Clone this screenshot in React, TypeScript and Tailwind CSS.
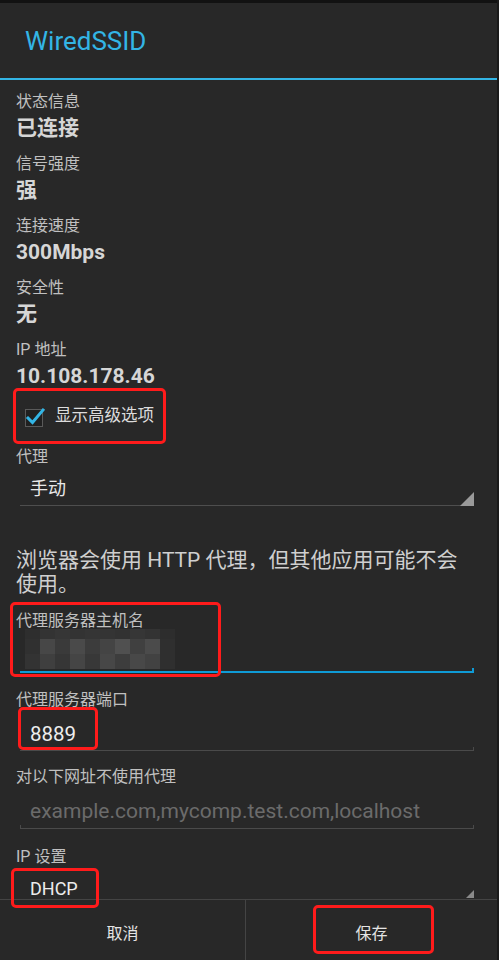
import React from "react";

const FONT = 'Roboto, "Noto Sans CJK SC", sans-serif';

const mosaic: string[][] = [
  ["#2e2e2e", "#333333", "#363636", "#333333", "#353535", "#343434", "#323232", "#363636", "#333333", "#2d2d2d"],
  ["#303030", "#474747", "#3a3a3a", "#4a4a4a", "#3c3c3c", "#444444", "#505050", "#404040", "#4b4b4b", "#2f2f2f"],
  ["#333333", "#3f3f3f", "#363636", "#454545", "#383838", "#474747", "#3d3d3d", "#484848", "#424242", "#2f2f2f"],
];

function Pair({ label, value }: { label: string; value: string }) {
  return (
    <div className="flex flex-col h-[62px]">
      <div className="h-[24px] leading-[24px] text-[16px] text-[#c0c0c0]">{label}</div>
      <div className="h-[28px] leading-[28px] text-[21px] font-bold text-[#d6d6d6]">{value}</div>
    </div>
  );
}

function Label({ children, cls }: { children: React.ReactNode; cls?: string }) {
  return <div className={"h-[24px] leading-[24px] text-[16px] text-[#c0c0c0] " + (cls ?? "")}>{children}</div>;
}

function RedBox({ cls }: { cls: string }) {
  return <div className={"absolute border-[3px] border-[#ff1b1b] rounded-[5px] pointer-events-none " + cls} />;
}

export default function App() {
  return (
    <div className="relative w-[499px] h-[960px] bg-[#1a1a1a] overflow-hidden" style={{ fontFamily: FONT }}>
      <div className="w-[497px] h-[960px] bg-[#282828] border-t-[3px] border-[#121212] flex flex-col">
        {/* Title */}
        <div className="h-[75px] flex items-center pl-[25px]">
          <span className="text-[26px] text-[#33b5e5] leading-none">WiredSSID</span>
        </div>
        <div className="h-[2px] bg-[#33b5e5]" />

        {/* Content */}
        <div className="flex-1 flex flex-col pl-[16px] pt-[10px]">
          <Pair label="状态信息" value="已连接" />
          <Pair label="信号强度" value="强" />
          <Pair label="连接速度" value="300Mbps" />
          <Pair label="安全性" value="无" />
          <Pair label="IP 地址" value="10.108.178.46" />

          {/* checkbox */}
          <div className="h-[48px] -mt-[8px] flex items-center pl-[8px] gap-[9px]">
            <svg width="22" height="22" viewBox="0 0 22 22">
              <rect x="1.5" y="4.5" width="17" height="17" fill="#202020" stroke="#5a5a5a" strokeWidth="1" />
              <path d="M4 13 L8.5 17.5 L19 5" fill="none" stroke="#33b5e5" strokeWidth="3" strokeLinecap="square" />
            </svg>
            <span className="text-[16.5px] text-[#dcdcdc]">显示高级选项</span>
          </div>

          <Label cls="mt-[5px]">代理</Label>
          {/* spinner */}
          <div className="relative h-[38px] mr-[23px] ml-[4px] flex items-center pl-[10px]">
            <span className="text-[18px] text-[#e8e8e8]">手动</span>
            <div className="absolute left-0 right-0 bottom-[1px] h-[1px] bg-[#4e4e4e]" />
            <div className="absolute right-0 bottom-[1px] w-[14px] h-[14px] bg-[#9a9a9a]" style={{ clipPath: "polygon(100% 0, 100% 100%, 0 100%)" }} />
          </div>

          <div className="mt-[41px] w-[470px] text-[21px] leading-[24px] text-[#cfcfcf]">
            浏览器会使用 HTTP 代理，但其他应用可能不会<span className="whitespace-nowrap">使用。</span>
          </div>

          <Label cls="mt-[13px]">代理服务器主机名</Label>
          <div className="relative h-[40px] mr-[23px] ml-[4px]">
            <div className="absolute left-[5px] top-[-4px] flex flex-col">
              {mosaic.map((row, i) => (
                <div key={i} className={"flex " + (i === 0 ? "h-[10px]" : "h-[15px]")}>
                  {row.map((c, j) => (
                    <div key={j} className="w-[15px]" style={{ background: c }} />
                  ))}
                </div>
              ))}
            </div>
            <div className="absolute left-0 right-0 bottom-0 h-[2px] bg-[#0f9bd6]" />
            <div className="absolute right-0 bottom-0 w-[2px] h-[5px] bg-[#0f9bd6]" />
          </div>

          <Label cls="mt-[15px]">代理服务器端口</Label>
          <div className="relative h-[39px] mr-[23px] ml-[4px] flex items-center pl-[10px] pt-[5px]">
            <span className="text-[20.5px] text-[#ededed]">8889</span>
            <div className="absolute left-0 right-0 bottom-0 h-[1px] bg-[#4a4a4a]" />
            <div className="absolute right-0 bottom-0 w-[1px] h-[4px] bg-[#4a4a4a]" />
          </div>

          <Label cls="mt-[14px]">对以下网址不使用代理</Label>
          <div className="relative h-[40px] mr-[23px] ml-[4px] flex items-center pl-[10px] pt-[6px]">
            <span className="text-[21px] text-[#6b6b6b] whitespace-nowrap">example.com,mycomp.test.com,localhost</span>
            <div className="absolute left-0 right-0 bottom-0 h-[1px] bg-[#4a4a4a]" />
            <div className="absolute right-0 bottom-0 w-[1px] h-[4px] bg-[#4a4a4a]" />
            <div className="absolute left-0 bottom-0 w-[1px] h-[4px] bg-[#4a4a4a]" />
          </div>

          <Label cls="mt-[16px]">IP 设置</Label>
          <div className="relative h-[29px] mr-[23px] ml-[4px] flex items-start pl-[10px] pt-[9px]">
            <span className="text-[18px] leading-[22px] text-[#ececec]">DHCP</span>
            <div className="absolute right-0 bottom-0 w-[8px] h-[8px] bg-[#8a8a8a]" style={{ clipPath: "polygon(100% 0, 100% 100%, 0 100%)" }} />
          </div>
        </div>

        {/* Buttons */}
        <div className="h-[61px] flex border-t border-[#444444]">
          <div className="w-[246px] flex items-center justify-center pt-[7px] text-[16px] text-[#e4e4e4] border-r border-[#444444]">取消</div>
          <div className="flex-1 flex items-center justify-center pt-[7px] text-[16px] text-[#e4e4e4]">保存</div>
        </div>
      </div>

      <RedBox cls="left-[13px] top-[388px] w-[153px] h-[56px]" />
      <RedBox cls="left-[10px] top-[602px] w-[211px] h-[75px]" />
      <RedBox cls="left-[18px] top-[707px] w-[80px] h-[43px]" />
      <RedBox cls="left-[11px] top-[868px] w-[88px] h-[40px]" />
      <RedBox cls="left-[313px] top-[905px] w-[121px] h-[49px]" />
    </div>
  );
}
